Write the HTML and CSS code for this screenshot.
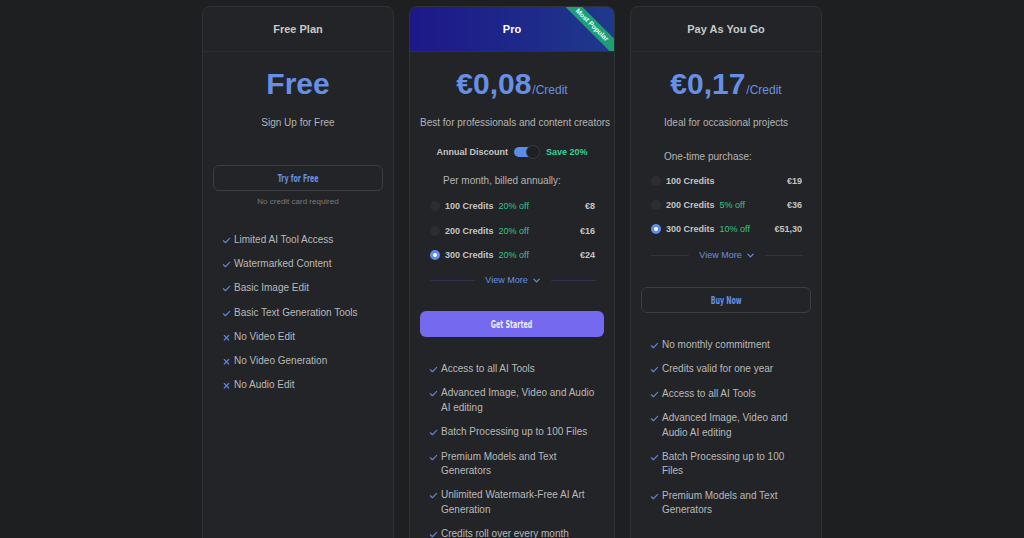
FILE: index.html
```html
<!DOCTYPE html>
<html lang="en">
<head>
<meta charset="utf-8">
<title>Pricing</title>
<link rel="stylesheet" href="styles.css">
</head>
<body>
<main class="plans">
  <section class="card card-free">
    <header class="card-head">Free Plan</header>
    <div class="card-body">
      <div class="price"><span class="amount">Free</span></div>
      <p class="tagline">Sign Up for Free</p>
      <button class="btn btn-outline btn-free"><span>Try for Free</span></button>
      <p class="note">No credit card required</p>
      <ul class="features features-free">
        <li><svg class="ic" viewBox="0 0 10 10"><path d="M1.5 5.3 L3.8 7.5 L8.5 2.6"/></svg>Limited AI Tool Access</li>
        <li><svg class="ic" viewBox="0 0 10 10"><path d="M1.5 5.3 L3.8 7.5 L8.5 2.6"/></svg>Watermarked Content</li>
        <li><svg class="ic" viewBox="0 0 10 10"><path d="M1.5 5.3 L3.8 7.5 L8.5 2.6"/></svg>Basic Image Edit</li>
        <li><svg class="ic" viewBox="0 0 10 10"><path d="M1.5 5.3 L3.8 7.5 L8.5 2.6"/></svg>Basic Text Generation Tools</li>
        <li><svg class="ic" viewBox="0 0 10 10"><path d="M2.5 2.8 L7.5 7.8 M7.5 2.8 L2.5 7.8"/></svg>No Video Edit</li>
        <li><svg class="ic" viewBox="0 0 10 10"><path d="M2.5 2.8 L7.5 7.8 M7.5 2.8 L2.5 7.8"/></svg>No Video Generation</li>
        <li><svg class="ic" viewBox="0 0 10 10"><path d="M2.5 2.8 L7.5 7.8 M7.5 2.8 L2.5 7.8"/></svg>No Audio Edit</li>
      </ul>
    </div>
  </section>

  <section class="card card-pro">
    <header class="card-head head-pro">Pro<span class="ribbon">Most Popular</span></header>
    <div class="card-body">
      <div class="price"><span class="amount">€0,08</span><span class="unit">/Credit</span></div>
      <p class="tagline">Best for professionals and content creators</p>
      <div class="toggle-row">
        <span class="toggle-label">Annual Discount</span>
        <span class="toggle"><span class="knob"></span></span>
        <span class="save">Save 20%</span>
      </div>
      <p class="opt-title opt-title-pro">Per month, billed annually:</p>
      <ul class="options options-pro">
        <li><span class="radio"></span><span class="cr">100 Credits</span><span class="off">20% off</span><span class="amt">€8</span></li>
        <li><span class="radio"></span><span class="cr">200 Credits</span><span class="off">20% off</span><span class="amt">€16</span></li>
        <li><span class="radio on"></span><span class="cr">300 Credits</span><span class="off">20% off</span><span class="amt">€24</span></li>
      </ul>
      <div class="more more-pro"><span class="rule"></span><span class="more-txt">View More<svg class="chev" viewBox="0 0 10 10"><path d="M2 3.5 L5 6.5 L8 3.5"/></svg></span><span class="rule"></span></div>
      <button class="btn btn-solid btn-pro"><span>Get Started</span></button>
      <ul class="features features-pro">
        <li><svg class="ic" viewBox="0 0 10 10"><path d="M1.5 5.3 L3.8 7.5 L8.5 2.6"/></svg>Access to all AI Tools</li>
        <li><svg class="ic" viewBox="0 0 10 10"><path d="M1.5 5.3 L3.8 7.5 L8.5 2.6"/></svg>Advanced Image, Video and Audio AI editing</li>
        <li><svg class="ic" viewBox="0 0 10 10"><path d="M1.5 5.3 L3.8 7.5 L8.5 2.6"/></svg>Batch Processing up to 100 Files</li>
        <li><svg class="ic" viewBox="0 0 10 10"><path d="M1.5 5.3 L3.8 7.5 L8.5 2.6"/></svg>Premium Models and Text Generators</li>
        <li><svg class="ic" viewBox="0 0 10 10"><path d="M1.5 5.3 L3.8 7.5 L8.5 2.6"/></svg>Unlimited Watermark-Free AI Art Generation</li>
        <li><svg class="ic" viewBox="0 0 10 10"><path d="M1.5 5.3 L3.8 7.5 L8.5 2.6"/></svg>Credits roll over every month</li>
      </ul>
    </div>
  </section>

  <section class="card card-pay">
    <header class="card-head">Pay As You Go</header>
    <div class="card-body">
      <div class="price"><span class="amount">€0,17</span><span class="unit">/Credit</span></div>
      <p class="tagline">Ideal for occasional projects</p>
      <p class="opt-title opt-title-pay">One-time purchase:</p>
      <ul class="options options-pay">
        <li><span class="radio"></span><span class="cr">100 Credits</span><span class="amt">€19</span></li>
        <li><span class="radio"></span><span class="cr">200 Credits</span><span class="off">5% off</span><span class="amt">€36</span></li>
        <li><span class="radio on"></span><span class="cr">300 Credits</span><span class="off">10% off</span><span class="amt">€51,30</span></li>
      </ul>
      <div class="more more-pay"><span class="rule"></span><span class="more-txt">View More<svg class="chev" viewBox="0 0 10 10"><path d="M2 3.5 L5 6.5 L8 3.5"/></svg></span><span class="rule"></span></div>
      <button class="btn btn-outline btn-pay"><span>Buy Now</span></button>
      <ul class="features features-pay">
        <li><svg class="ic" viewBox="0 0 10 10"><path d="M1.5 5.3 L3.8 7.5 L8.5 2.6"/></svg>No monthly commitment</li>
        <li><svg class="ic" viewBox="0 0 10 10"><path d="M1.5 5.3 L3.8 7.5 L8.5 2.6"/></svg>Credits valid for one year</li>
        <li><svg class="ic" viewBox="0 0 10 10"><path d="M1.5 5.3 L3.8 7.5 L8.5 2.6"/></svg>Access to all AI Tools</li>
        <li><svg class="ic" viewBox="0 0 10 10"><path d="M1.5 5.3 L3.8 7.5 L8.5 2.6"/></svg>Advanced Image, Video and Audio AI editing</li>
        <li><svg class="ic" viewBox="0 0 10 10"><path d="M1.5 5.3 L3.8 7.5 L8.5 2.6"/></svg>Batch Processing up to 100 Files</li>
        <li><svg class="ic" viewBox="0 0 10 10"><path d="M1.5 5.3 L3.8 7.5 L8.5 2.6"/></svg>Premium Models and Text Generators</li>
      </ul>
    </div>
  </section>
</main>
</body>
</html>
```

FILE: styles.css
```css
html, body {
  margin: 0;
  padding: 0;
  height: 100%;
  overflow: hidden;
}
body {
  background: #1e1f21;
  font-family: "Liberation Sans", Arial, sans-serif;
  color: #b9b9b9;
}
ul, p { margin: 0; padding: 0; }
ul { list-style: none; }

.plans {
  display: flex;
  justify-content: center;
  align-items: flex-start;
  gap: 15px;
  padding: 6px 0 0 0;
}

.card {
  background: #232427;
  border: 1px solid #303237;
  border-radius: 8px;
  min-height: 600px;
  box-sizing: border-box;
  display: flex;
  flex-direction: column;
  overflow: hidden;
}
.card-free, .card-pay { width: 192px; }
.card-pro { width: 206px; }

.card-head {
  position: relative;
  height: 44px;
  display: flex;
  align-items: center;
  justify-content: center;
  font-size: 11px;
  font-weight: bold;
  color: #c9c9c9;
  border-bottom: 1px solid #2a2c30;
  overflow: hidden;
}
.head-pro {
  background: linear-gradient(90deg, #1d1889 0%, #1e2a8a 60%, #1e3a8a 100%);
  color: #ffffff;
  border-bottom-color: #1e2a8a;
}
.ribbon {
  position: absolute;
  top: 18px;
  right: -23px;
  width: 90px;
  height: 12px;
  line-height: 12px;
  margin-top: -6px;
  background: #1f9e74;
  color: #e8fff5;
  font-size: 6.8px;
  font-weight: bold;
  text-align: center;
  transform: rotate(45deg);
}

.card-body {
  display: flex;
  flex-direction: column;
  padding: 0 10px;
}

.price {
  margin-top: 14px;
  height: 36px;
  display: flex;
  align-items: baseline;
  justify-content: center;
  color: #6790e4;
}
.amount {
  font-size: 30px;
  line-height: 36px;
  font-weight: bold;
}
.unit {
  font-size: 12px;
  margin-left: 1px;
}

.tagline {
  margin-top: 14px;
  font-size: 10px;
  line-height: 14px;
  text-align: center;
  white-space: nowrap;
  color: #b4b4b4;
}

.btn {
  display: flex;
  align-items: center;
  justify-content: center;
  height: 26px;
  border-radius: 6px;
  font-family: "DejaVu Sans Condensed", "Liberation Sans Narrow", sans-serif;
  font-weight: bold;
  font-size: 10px;
  padding: 0;
  cursor: pointer;
}
.btn span { display: inline-block; transform: scaleX(0.7); }
.btn-outline {
  background: transparent;
  border: 1px solid #3c3e43;
  color: #6790e4;
}
.btn-solid {
  background: #7569ef;
  border: none;
  color: #ececff;
}
.btn-free { margin-top: 35px; }
.btn-pro { margin-top: 25px; }
.btn-pay { margin-top: 26px; }

.note {
  margin-top: 6px;
  font-size: 8px;
  line-height: 10px;
  text-align: center;
  color: #7a7a7a;
}

.features {
  display: flex;
  flex-direction: column;
  font-size: 10px;
  color: #b9b9b9;
}
.features li {
  display: flex;
  align-items: flex-start;
}
.features-free {
  margin-top: 26px;
  gap: 10px;
  line-height: 14.2px;
  padding: 0 4px 0 9px;
}
.features-pro {
  margin-top: 25px;
  gap: 10px;
  line-height: 14.4px;
  padding: 0 2px 0 9px;
}
.features-pay {
  margin-top: 25px;
  gap: 10px;
  line-height: 14.4px;
  padding: 0 12px 0 9px;
}
.ic {
  flex: none;
  width: 9px;
  height: 9px;
  margin: 3px 3px 0 0;
  fill: none;
  stroke: #5f83d6;
  stroke-width: 1.3;
  stroke-linecap: round;
  stroke-linejoin: round;
}

.toggle-row {
  margin-top: 15px;
  height: 14px;
  display: flex;
  align-items: center;
  justify-content: center;
  font-size: 9px;
  font-weight: bold;
}
.toggle-label { color: #c4c4c4; }
.toggle {
  position: relative;
  width: 25px;
  height: 10px;
  margin: 0 7px 0 6px;
  background: #5d8ce8;
  border-radius: 6px;
}
.knob {
  position: absolute;
  right: -1px;
  top: -2px;
  width: 12px;
  height: 12px;
  border-radius: 50%;
  background: #1f2023;
  border: 1px solid #3a3c45;
}
.save { color: #34d399; }

.opt-title {
  font-size: 10px;
  line-height: 14px;
  color: #b4b4b4;
  padding-left: 23px;
}
.opt-title-pro { margin-top: 15px; }
.opt-title-pay { margin-top: 20px; }

.options {
  display: flex;
  flex-direction: column;
  padding: 0 9px 0 10px;
}
.options-pro { margin-top: 11px; gap: 10.5px; }
.options-pay { margin-top: 10px; gap: 10px; }
.options li {
  display: flex;
  align-items: center;
  height: 14px;
  font-size: 9px;
  font-weight: bold;
  color: #c4c4c4;
}
.radio {
  width: 10px;
  height: 10px;
  border-radius: 50%;
  background: #2c2d30;
  margin-right: 5px;
  box-sizing: border-box;
}
.radio.on {
  background: #ffffff;
  border: 3px solid #5f8ded;
}
.off {
  margin-left: 5px;
  color: #34c48c;
  font-weight: normal;
}
.amt { margin-left: auto; }

.more {
  height: 12px;
  display: flex;
  align-items: center;
  padding: 0 8px 0 10px;
  gap: 10px;
}
.more-pro { margin-top: 12px; }
.more-pay { margin-top: 13px; }
.rule {
  flex: 1;
  height: 1px;
  background: #2e3150;
}
.more-txt {
  display: flex;
  align-items: center;
  font-size: 9px;
  color: #6790e4;
}
.chev {
  width: 9px;
  height: 9px;
  margin-left: 4px;
  fill: none;
  stroke: #6790e4;
  stroke-width: 1.3;
  stroke-linecap: round;
  stroke-linejoin: round;
}
```
